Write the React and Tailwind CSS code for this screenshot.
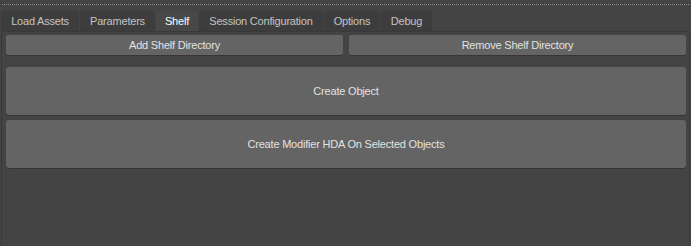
export default function App() {
  const tabs = [
    { label: 'Load Assets', w: 'w-[78px]' },
    { label: 'Parameters', w: 'w-[75px]' },
    { label: 'Shelf', w: 'w-[42px]', active: true },
    { label: 'Session Configuration', w: 'w-[124px]' },
    { label: 'Options', w: 'w-[56px]' },
    { label: 'Debug', w: 'w-[51px]' },
  ]

  return (
    <div className="w-[691px] h-[246px] bg-[#444444] overflow-hidden font-['Liberation_Sans',sans-serif] text-[11px] tracking-[-0.2px] flex flex-col">
      {/* dotted drag handle */}
      <div className="pt-[4px] px-[2px]">
        <div className="border-t border-dotted border-[#8e8e8e]" />
      </div>

      {/* tabs */}
      <div className="flex items-end pl-[1px] gap-[1px] h-[26px]">
        {tabs.map((t) => (
          <div
            key={t.label}
            className={`${t.w} h-[20px] rounded-t-[3px] flex items-center justify-center ${
              t.active ? 'bg-[#484848] text-white' : 'bg-[#3d3d3d] text-[#c4c4c4]'
            }`}
          >
            {t.label}
          </div>
        ))}
      </div>

      {/* panel */}
      <div className="flex-1 mx-[1px] border border-b-0 border-[#393939] bg-[#444444] pl-[4px] pr-[3px] pt-[3px] flex flex-col text-[#e2e2e2]">
        <div className="flex gap-[6px]">
          <button className="flex-1 h-[20px] bg-[#646464] rounded-[2px] shadow-[0_1px_0_#363636]">
            Add Shelf Directory
          </button>
          <button className="flex-1 h-[20px] bg-[#646464] rounded-[2px] shadow-[0_1px_0_#363636]">
            Remove Shelf Directory
          </button>
        </div>
        <button className="mt-[12px] h-[48px] bg-[#646464] rounded-[3px] shadow-[0_1px_0_#363636]">
          Create Object
        </button>
        <button className="mt-[5px] h-[48px] bg-[#646464] rounded-[3px] shadow-[0_1px_0_#363636]">
          Create Modifier HDA On Selected Objects
        </button>
      </div>
    </div>
  )
}
